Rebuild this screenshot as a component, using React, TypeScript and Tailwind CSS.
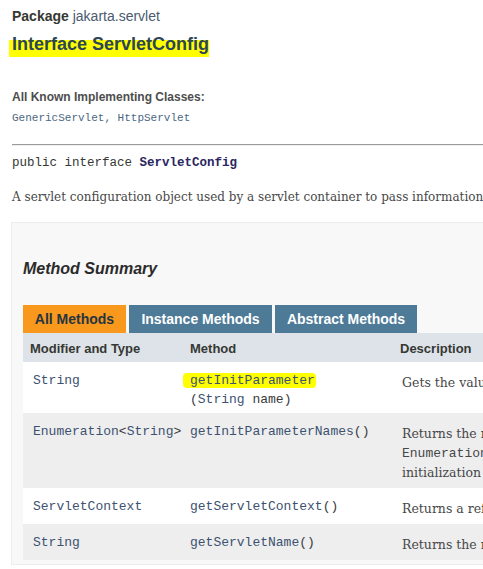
const mono = "font-['Liberation_Mono',monospace]";
const sans = "font-['Liberation_Sans',Arial,sans-serif]";
const serif = "font-['DejaVu_Serif',serif]";

const rows = [
  {
    type: <span className="text-[#3d5170]">String</span>,
    method: (
      <>
        <span className="-ml-[7px] pl-[7px] pr-[1px] bg-[#ffff00] rounded-sm text-[#3d5170]">getInitParameter</span>
        <br />
        <span className="text-[#3a3a3a]">(<span className="text-[#3d5170]">String</span> name)</span>
      </>
    ),
    desc: ["Gets the value of the named initialization parameter, or null if the parameter does not exist."],
    bg: "bg-white",
  },
  {
    type: (
      <span className="text-[#3d5170]">
        Enumeration<span className="text-[#3a3a3a]">&lt;</span>String<span className="text-[#3a3a3a]">&gt;</span>
      </span>
    ),
    method: (
      <>
        <span className="text-[#3d5170]">getInitParameterNames</span>
        <span className="text-[#3a3a3a]">()</span>
      </>
    ),
    desc: [
      "Returns the names of the servlet's initialization parameters as an",
      "@Enumeration of String objects, or an empty Enumeration if the servlet has no",
      "initialization parameters.",
    ],
    bg: "bg-[#eeeeef]",
  },
  {
    type: <span className="text-[#3d5170]">ServletContext</span>,
    method: (
      <>
        <span className="text-[#3d5170]">getServletContext</span>
        <span className="text-[#3a3a3a]">()</span>
      </>
    ),
    desc: ["Returns a reference to the ServletContext in which the caller is executing."],
    bg: "bg-white",
  },
  {
    type: <span className="text-[#3d5170]">String</span>,
    method: (
      <>
        <span className="text-[#3d5170]">getServletName</span>
        <span className="text-[#3a3a3a]">()</span>
      </>
    ),
    desc: ["Returns the name of this servlet instance."],
    bg: "bg-[#eeeeef]",
  },
];

export default function App() {
  return (
    <div className="w-[483px] h-[569px] overflow-hidden bg-white text-[#353833]">
      <div className={`w-[1000px] pl-[12px] pt-[8px] ${sans}`}>
        {/* Header */}
        <div className="text-[14px] leading-[16px] h-[16px]">
          <span className="font-bold text-[#353833]">Package</span>{" "}
          <span className="text-[#4a5a70]">jakarta.servlet</span>
        </div>
        <h1 className="mt-[10px] text-[18px] leading-[20px] font-bold text-[#2c4557]">
          <span className="-ml-[3px] pl-[3px] pb-[3px] bg-[linear-gradient(to_bottom,transparent_6px,#ffff00_6px)]">
            Interface ServletConfig
          </span>
        </h1>

        <div className="mt-[36px] text-[12px] leading-[14px] font-bold text-[#4d4d4d]">
          All Known Implementing Classes:
        </div>
        <div className={`mt-[7px] text-[11px] leading-[14px] text-[#4a6782] ${mono}`}>
          GenericServlet, HttpServlet
        </div>

        <div className="mt-[19px] border-t border-[#9a9a9a] border-b border-b-[#eeeeee] w-[480px]" />

        <div className={`mt-[9px] text-[12.5px] leading-[16px] ${mono}`}>
          public interface <span className="font-bold text-[#2a2660]">ServletConfig</span>
        </div>

        <p className={`mt-[17px] text-[12px] leading-[18px] whitespace-nowrap text-[#474747] ${serif}`}>
          A servlet configuration object used by a servlet container to pass information to a servlet during initialization.
        </p>

        {/* Method summary box */}
        <div className="mt-[16px] -ml-[1px] bg-[#f8f8f8] border border-[#ededed] pl-[11px] pt-[37px] pb-[4px]">
          <h3 className="text-[16px] leading-[18px] font-bold italic text-[#2b2b2b]">Method Summary</h3>

          <div className="mt-[27px] flex gap-[3px] text-[14px] font-bold h-[28px]">
            <div className="w-[103px] bg-[#f8981d] text-[#253441] flex items-center justify-center">All Methods</div>
            <div className="w-[143px] bg-[#4d7a97] text-white flex items-center justify-center">Instance Methods</div>
            <div className="w-[142px] bg-[#4d7a97] text-white flex items-center justify-center">Abstract Methods</div>
          </div>

          <div className="grid grid-cols-[160px_210px_1fr]">
            <div className="bg-[#dee3e9] pl-[7px] pt-[8px] pb-[5px] text-[13px] leading-[16px] font-bold">Modifier and Type</div>
            <div className="bg-[#dee3e9] pl-[7px] pt-[8px] pb-[5px] text-[13px] leading-[16px] font-bold">Method</div>
            <div className="bg-[#dee3e9] pl-[7px] pt-[8px] pb-[5px] text-[13px] leading-[16px] font-bold">Description</div>

            {rows.map((r, i) => (
              <div key={i} className="contents">
                <div className={`${r.bg} pl-[10px] pt-[9px] pb-[4px] text-[13px] leading-[19px] ${mono}`}>{r.type}</div>
                <div className={`${r.bg} pl-[7px] pt-[9px] pb-[4px] text-[13px] leading-[19px] ${mono}`}>{r.method}</div>
                <div className={`${r.bg} pl-[9px] pt-[11px] pb-[6px] text-[12.5px] leading-[19px] text-[#474747] whitespace-nowrap ${serif}`}>
                  {r.desc.map((line, j) =>
                    line.startsWith("@") ? (
                      <div key={j}>
                        <span className={`${mono} text-[13px]`}>Enumeration</span> of <span className={`${mono} text-[13px]`}>String</span> objects, or an empty <span className={`${mono} text-[13px]`}>Enumeration</span> if the servlet has no
                      </div>
                    ) : (
                      <div key={j}>{line}</div>
                    )
                  )}
                </div>
              </div>
            ))}
          </div>
        </div>
      </div>
    </div>
  );
}
